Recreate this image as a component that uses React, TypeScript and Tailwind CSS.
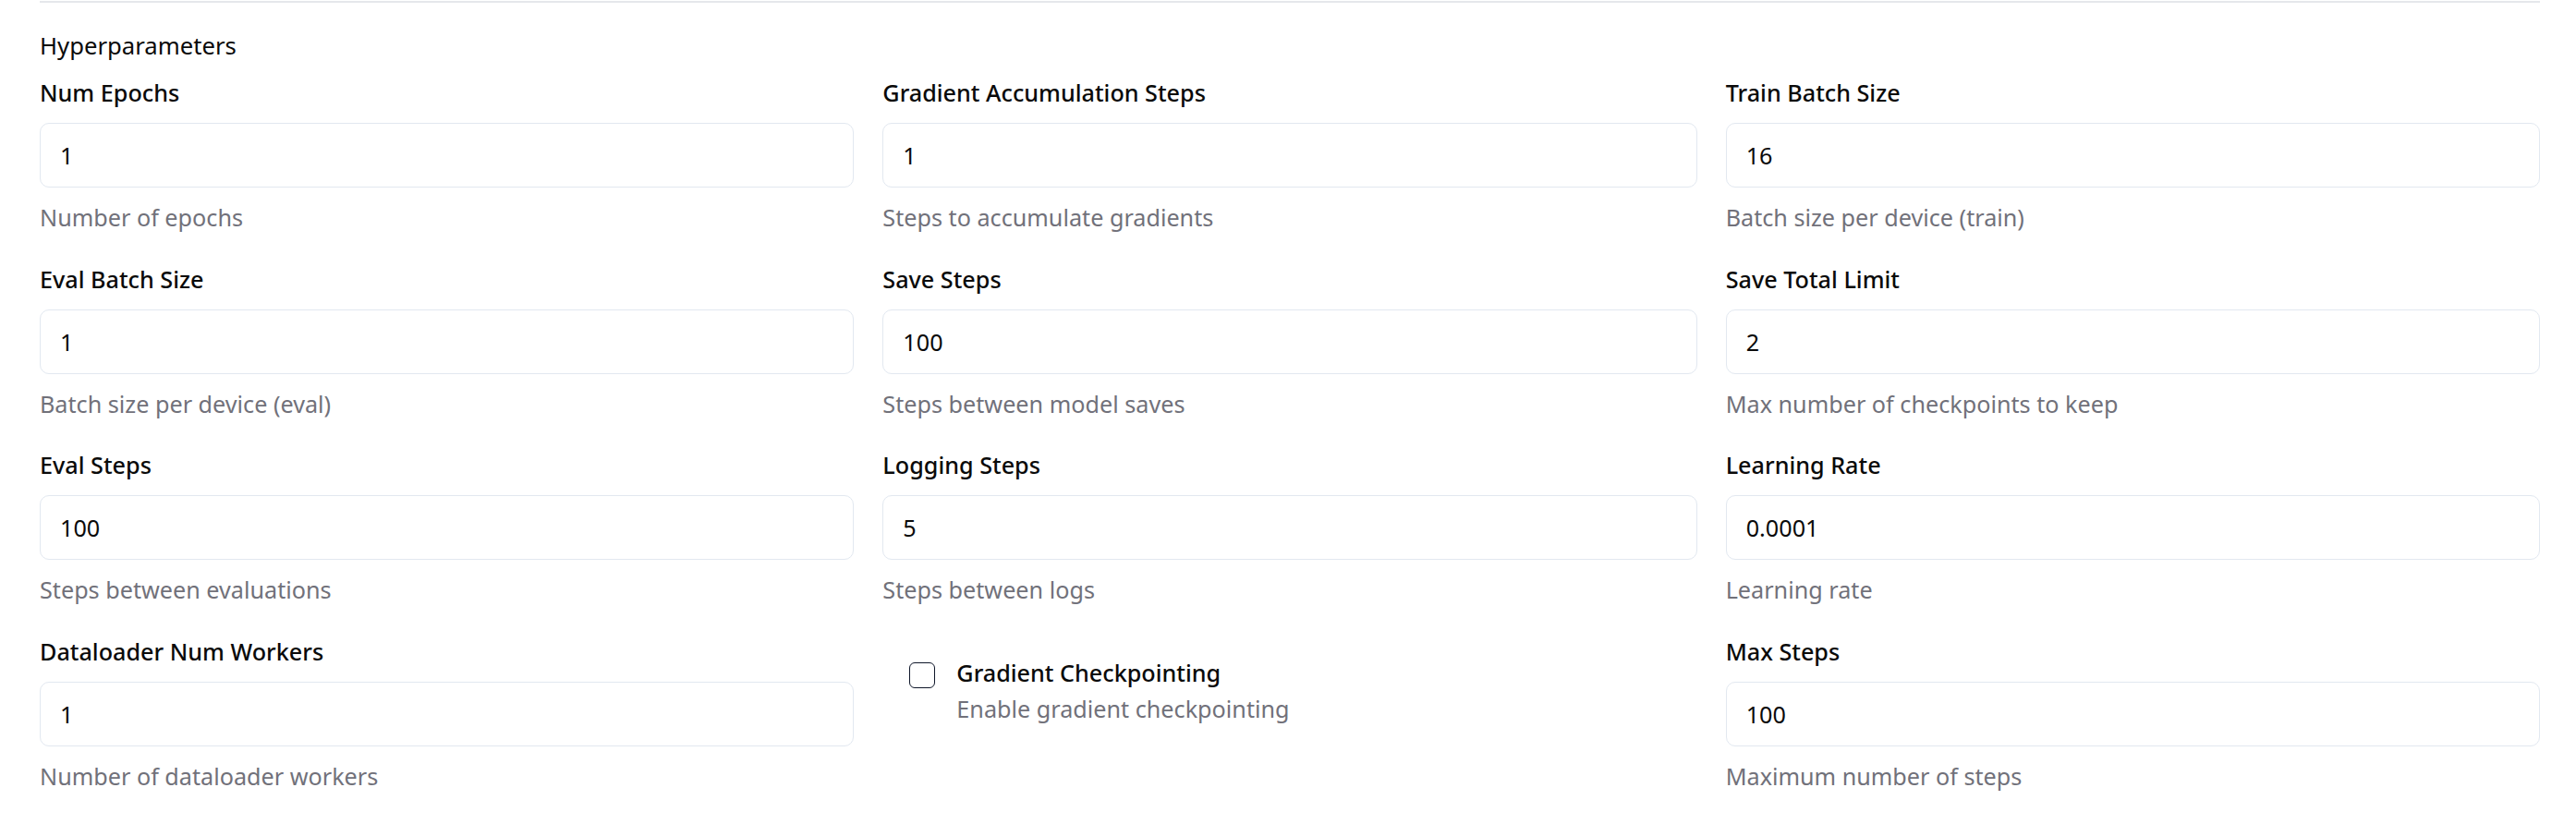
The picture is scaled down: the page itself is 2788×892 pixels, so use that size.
type Field = { label: string; value: string; help: string };

const fields: (Field | "checkbox")[] = [
  { label: "Num Epochs", value: "1", help: "Number of epochs" },
  { label: "Gradient Accumulation Steps", value: "1", help: "Steps to accumulate gradients" },
  { label: "Train Batch Size", value: "16", help: "Batch size per device (train)" },
  { label: "Eval Batch Size", value: "1", help: "Batch size per device (eval)" },
  { label: "Save Steps", value: "100", help: "Steps between model saves" },
  { label: "Save Total Limit", value: "2", help: "Max number of checkpoints to keep" },
  { label: "Eval Steps", value: "100", help: "Steps between evaluations" },
  { label: "Logging Steps", value: "5", help: "Steps between logs" },
  { label: "Learning Rate", value: "0.0001", help: "Learning rate" },
  { label: "Dataloader Num Workers", value: "1", help: "Number of dataloader workers" },
  "checkbox",
  { label: "Max Steps", value: "100", help: "Maximum number of steps" },
];

function NumberField({ label, value, help }: Field) {
  return (
    <div className="flex flex-col">
      <label className="text-[25.2px] leading-[35px] font-medium text-[#0a0a0a]">{label}</label>
      <input
        type="text"
        defaultValue={value}
        className="mt-[15px] h-[70px] w-full rounded-[10px] border border-[#e2e8f0] bg-white px-[21px] text-[25.2px] text-[#0a0a0a] outline-none"
      />
      <p className="mt-[15px] text-[25.2px] leading-[35px] text-[#71717a]">{help}</p>
    </div>
  );
}

function CheckboxField() {
  return (
    <div className="flex items-start gap-[23px] pt-[28px] pl-[29px]">
      <button
        type="button"
        className="mt-px h-[28px] w-[28px] shrink-0 rounded-[6px] border-[1.75px] border-[#0f172a] bg-white"
      />
      <div className="flex flex-col">
        <span className="text-[25.2px] leading-none font-medium text-[#0a0a0a]">Gradient Checkpointing</span>
        <span className="mt-[9px] text-[25.2px] leading-[35px] text-[#71717a]">Enable gradient checkpointing</span>
      </div>
    </div>
  );
}

export default function App() {
  return (
    <div className="min-h-screen bg-white pl-[43px] pr-[39px] pt-px font-['Noto_Sans',sans-serif]">
      {/* separator from the section above */}
      <div className="h-[2px] bg-[#e5e7eb]" />

      <h3 className="mt-[29px] text-[25.7px] leading-[35px] text-[#0a0a0a]">Hyperparameters</h3>

      <div className="mt-[16px] grid grid-cols-3 gap-x-[31px] gap-y-[31.5px]">
        {fields.map((f, i) =>
          f === "checkbox" ? <CheckboxField key={i} /> : <NumberField key={i} {...f} />
        )}
      </div>
    </div>
  );
}
